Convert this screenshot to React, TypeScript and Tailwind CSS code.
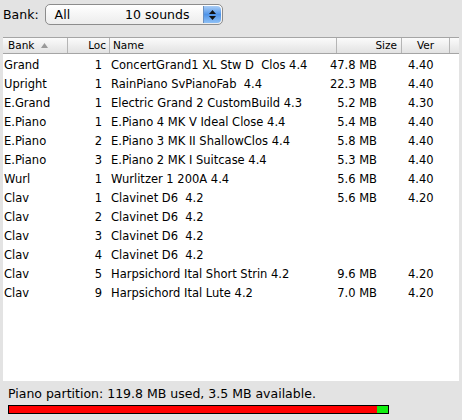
import React from "react";

const rows = [
  ["Grand", "1", "ConcertGrand1 XL Stw D  Clos 4.4", "47.8 MB", "4.40"],
  ["Upright", "1", "RainPiano SvPianoFab  4.4", "22.3 MB", "4.40"],
  ["E.Grand", "1", "Electric Grand 2 CustomBuild 4.3", "5.2 MB", "4.30"],
  ["E.Piano", "1", "E.Piano 4 MK V Ideal Close 4.4", "5.4 MB", "4.40"],
  ["E.Piano", "2", "E.Piano 3 MK II ShallowClos 4.4", "5.8 MB", "4.40"],
  ["E.Piano", "3", "E.Piano 2 MK I Suitcase 4.4", "5.3 MB", "4.40"],
  ["Wurl", "1", "Wurlitzer 1 200A 4.4", "5.6 MB", "4.40"],
  ["Clav", "1", "Clavinet D6  4.2", "5.6 MB", "4.20"],
  ["Clav", "2", "Clavinet D6  4.2", "", ""],
  ["Clav", "3", "Clavinet D6  4.2", "", ""],
  ["Clav", "4", "Clavinet D6  4.2", "", ""],
  ["Clav", "5", "Harpsichord Ital Short Strin 4.2", "9.6 MB", "4.20"],
  ["Clav", "9", "Harpsichord Ital Lute 4.2", "7.0 MB", "4.20"],
];

const font = { fontFamily: '"DejaVu Sans", "Liberation Sans", sans-serif' };

export default function App() {
  return (
    <div
      className="w-[462px] h-[420px] bg-[#e3e3e3] flex flex-col text-black overflow-hidden"
      style={font}
    >
      {/* Top bar */}
      <div className="h-[37px] flex items-start pt-[4px]">
        <span className="ml-[3px] mt-[3px] text-[12.5px] leading-[15px]">Bank:</span>
        <div className="ml-[6px] w-[178px] h-[21px] rounded-[5px] border border-[#8c8c8c] bg-gradient-to-b from-white to-[#ececec] flex items-center relative">
          <span className="ml-[9px] text-[12.5px] leading-[15px]">All</span>
          <span className="ml-[55px] text-[12.5px] leading-[15px]">10 sounds</span>
          <div className="absolute right-[1px] top-[1px] bottom-[1px] w-[18px] rounded-r-[4px] bg-gradient-to-b from-[#a9cdf5] via-[#4f94e8] to-[#8ec0f5] border-l border-[#6a8fbf] flex flex-col items-center justify-center gap-[2px]">
            <svg width="7" height="4" viewBox="0 0 7 4"><path d="M3.5 0 L7 4 L0 4 Z" fill="#111" /></svg>
            <svg width="7" height="4" viewBox="0 0 7 4"><path d="M0 0 L7 0 L3.5 4 Z" fill="#111" /></svg>
          </div>
        </div>
      </div>

      {/* Table */}
      <div className="mx-[3px] h-[344px] bg-white flex flex-col">
        <div className="h-[17px] flex border-t border-b border-[#a5a5a5] bg-gradient-to-b from-[#fbfbfb] to-[#e2e2e2] text-[10.5px] leading-[15px]">
          <div className="w-[65px] border-r border-[#b5b5b5] flex items-center pl-[5px]">
            <span>Bank</span>
            <svg className="ml-[7px]" width="7" height="5" viewBox="0 0 7 5"><path d="M3.5 0 L7 5 L0 5 Z" fill="#9a9a9a" /></svg>
          </div>
          <div className="w-[42px] border-r border-[#b5b5b5] flex items-center justify-end pr-[3px]">Loc</div>
          <div className="w-[227px] border-r border-[#b5b5b5] flex items-center pl-[3px]">Name</div>
          <div className="w-[65px] border-r border-[#b5b5b5] flex items-center justify-end pr-[4px]">Size</div>
          <div className="w-[48px] border-r border-[#b5b5b5] flex items-center justify-center">Ver</div>
          <div className="flex-1" />
        </div>
        <div className="flex flex-col text-[11.5px] pt-[2px]">
          {rows.map((r, i) => (
            <div key={i} className="h-[19px] flex items-center leading-[19px] whitespace-pre">
              <div className="w-[65px] pl-[1px]">{r[0]}</div>
              <div className="w-[34px] text-right">{r[1]}</div>
              <div className="w-[200px] pl-[9px]">{r[2]}</div>
              <div className="w-[75px] text-right">{r[3]}</div>
              <div className="pl-[31px]">{r[4]}</div>
            </div>
          ))}
        </div>
      </div>

      {/* Status */}
      <div className="flex-1 flex flex-col pl-[8px] pt-[5px]">
        <span className="text-[12.5px] leading-[15px]">Piano partition: 119.8 MB used, 3.5 MB available.</span>
        <div className="mt-[4px] w-[381px] h-[9px] border border-black flex">
          <div className="w-[368px] bg-[#ff0000]" />
          <div className="flex-1 bg-[#11ee11]" />
        </div>
      </div>
    </div>
  );
}
